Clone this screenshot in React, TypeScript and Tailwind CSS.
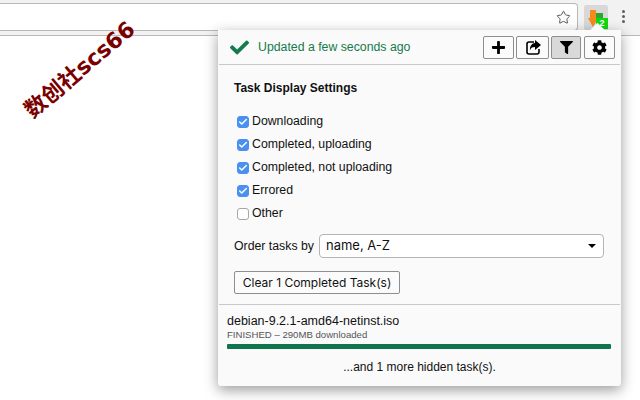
import type { ReactNode } from "react";
import { Check, Star } from "lucide-react";
import { FaCheck, FaCog, FaFilter, FaPlus } from "react-icons/fa";

const FILTERS = [
  { label: "Downloading", checked: true },
  { label: "Completed, uploading", checked: true },
  { label: "Completed, not uploading", checked: true },
  { label: "Errored", checked: true },
  { label: "Other", checked: false },
];

function ToolButton({ className, children }: { className: string; children: ReactNode }) {
  return (
    <button
      className={`flex h-[23px] items-center justify-center rounded-[2px] border border-[#8e8e8e] text-black ${className}`}
    >
      {children}
    </button>
  );
}

function FilterRow({ label, checked }: { label: string; checked: boolean }) {
  return (
    <label className="flex h-[23px] items-center">
      <span
        className={`mx-[3px] flex h-[12px] w-[12px] items-center justify-center rounded-[3px] border ${
          checked ? "border-[#4a90f0] bg-[#4a90f0]" : "border-[#a8a8a8] bg-white"
        }`}
      >
        {checked && <Check size={10} strokeWidth={3.5} className="text-white" />}
      </span>
      <span className="text-[12.3px] text-[#111]">{label}</span>
    </label>
  );
}

export default function App() {
  return (
    <div className="relative h-[400px] w-[640px] overflow-hidden bg-white font-['Liberation_Sans',Arial,sans-serif]">
      {/* browser toolbar */}
      <div className="flex h-[36px] items-start border-b border-[#b9b9b9] bg-[#f2f2f2]">
        <div className="mt-[3px] flex h-[28px] w-[578px] items-center justify-end rounded-r-[4px] border-y border-r border-[#b8b8b8] bg-white pr-[6px]">
          <Star size={15} strokeWidth={1.6} className="text-[#5a5a5a]" />
        </div>
        <div className="relative mt-[5px] ml-[6px] h-[25px] w-[24px] rounded-[2px] bg-[#d8d8d8]">
          <svg viewBox="0 0 24 25" className="absolute inset-0 h-[25px] w-[24px]">
            <path d="M6 5h6v8h2l-5 9-5-9h2z" fill="#f28a1c" />
            <rect x="12" y="8" width="7" height="6" fill="#2fa52f" />
          </svg>
          <span className="absolute top-[13px] left-[12px] flex h-[11px] w-[12px] items-center justify-center bg-[#11d911] text-[9px] leading-none font-bold text-white">
            2
          </span>
        </div>
        <div className="mt-[10px] ml-[14px] flex flex-col gap-[2px]">
          <span className="h-[3px] w-[3px] rounded-full bg-[#5f5f5f]" />
          <span className="h-[3px] w-[3px] rounded-full bg-[#5f5f5f]" />
          <span className="h-[3px] w-[3px] rounded-full bg-[#5f5f5f]" />
        </div>
      </div>

      {/* watermark */}
      <div className="absolute top-[59px] left-[12px] -rotate-[40deg] text-[22px] leading-none font-bold whitespace-nowrap text-[#7a0000] font-['DejaVu_Sans','Noto_Sans_CJK_SC',sans-serif]">
        数创社scs66
      </div>

      {/* popup */}
      <div className="absolute top-[30px] left-[218px] h-[356px] w-[403px] rounded-b-[3px] bg-[#fafafa] shadow-[0_4px_14px_rgba(0,0,0,0.4)]">
        <div className="absolute -top-[5px] left-[374px] h-[11px] w-[11px] rotate-45 bg-[#fafafa]" />
        <div className="relative mx-[1px] flex h-[35px] items-center border-b border-[#c9c9c9] pr-[5px] pl-[11px]">
          <FaCheck size={19} className="text-[#157a4c]" />
          <span className="ml-[9px] text-[12.3px] text-[#157a4c]">Updated a few seconds ago</span>
          <div className="ml-auto flex gap-[2px]">
            <ToolButton className="w-[31px] bg-[#fbfbfb]">
              <FaPlus size={15} />
            </ToolButton>
            <ToolButton className="w-[33px] bg-[#fbfbfb]">
              <svg viewBox="0 0 16 16" className="h-[16px] w-[16px]">
                <path d="M9 3H4a2 2 0 0 0-2 2v8a2 2 0 0 0 2 2h8a2 2 0 0 0 2-2v-3" fill="none" stroke="currentColor" strokeWidth="1.6" />
                <path d="M10 1l6 5-6 5V8C7 8 5.5 9 5 11.5 4.5 7 7 4.2 10 4z" fill="currentColor" />
              </svg>
            </ToolButton>
            <ToolButton className="w-[30px] bg-[#d9d9d9]">
              <FaFilter size={13} />
            </ToolButton>
            <ToolButton className="ml-[1px] w-[31px] bg-[#fbfbfb]">
              <FaCog size={15} />
            </ToolButton>
          </div>
        </div>

        <div className="px-[16px]">
          <h2 className="mt-[15px] text-[12px] leading-[17px] font-bold text-[#111]">Task Display Settings</h2>
          <div className="mt-[13px] flex flex-col">
            {FILTERS.map((f) => (
              <FilterRow key={f.label} label={f.label} checked={f.checked} />
            ))}
          </div>
          <div className="mt-[9px] flex items-center">
            <span className="text-[12.3px] whitespace-nowrap text-[#111]">Order tasks by</span>
            <div className="ml-[5px] flex h-[24px] w-[285px] items-center justify-between rounded-[4px] border border-[#b5b5b5] bg-white pr-[7px] pl-[6px]">
              <span className="font-['Inter',sans-serif] text-[13px] text-[#111]">name, A-Z</span>
              <span className="h-0 w-0 border-x-[4px] border-t-[4px] border-x-transparent border-t-black" />
            </div>
          </div>
          <button className="mt-[13px] flex h-[23px] w-[166px] items-center justify-center rounded-[2px] border border-[#8e8e8e] bg-[#fbfbfb] font-['Inter',sans-serif] text-[12px] text-[#111]">
            Clear 1 Completed Task(s)
          </button>
        </div>

        <div className="mx-[1px] mt-[10px] border-t border-[#c9c9c9] px-[8px] pt-[9px]">
          <div className="text-[12.5px] leading-[15px] text-[#111]">debian-9.2.1-amd64-netinst.iso</div>
          <div className="text-[9.6px] leading-[11px] text-[#555]">FINISHED – 290MB downloaded</div>
          <div className="mt-[4px] mr-[1px] h-[5px] rounded-[1px] bg-[#10754c]" />
          <div className="mt-[11px] text-center text-[12px] leading-[15px] text-[#111]">...and 1 more hidden task(s).</div>
        </div>
      </div>
    </div>
  );
}
